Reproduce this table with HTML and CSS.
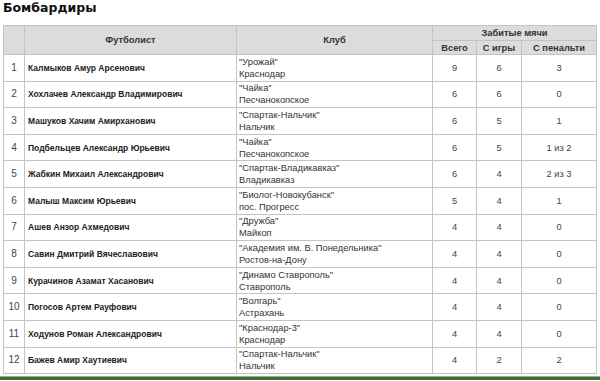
FILE: index.html
```html
<!DOCTYPE html>
<html lang="ru">
<head>
<meta charset="utf-8">
<link rel="stylesheet" href="styles.css">
</head>
<body>
<h2 class="title">Бомбардиры</h2>
<table class="scorers">
  <colgroup>
    <col class="c-num"><col class="c-name"><col class="c-club"><col class="c-all"><col class="c-play"><col class="c-pen">
  </colgroup>
  <thead>
    <tr class="h1">
      <th rowspan="2"></th>
      <th rowspan="2">Футболист</th>
      <th rowspan="2">Клуб</th>
      <th colspan="3">Забитые мячи</th>
    </tr>
    <tr class="h2">
      <th>Всего</th>
      <th>С игры</th>
      <th>С пенальти</th>
    </tr>
  </thead>
  <tbody>
    <tr><td class="n">1</td><td class="p">Калмыков Амур Арсенович</td><td class="club">"Урожай"<br>Краснодар</td><td class="v">9</td><td class="v">6</td><td class="v">3</td></tr>
    <tr><td class="n">2</td><td class="p">Хохлачев Александр Владимирович</td><td class="club">"Чайка"<br>Песчанокопское</td><td class="v">6</td><td class="v">6</td><td class="v">0</td></tr>
    <tr><td class="n">3</td><td class="p">Машуков Хачим Амирханович</td><td class="club">"Спартак-Нальчик"<br>Нальчик</td><td class="v">6</td><td class="v">5</td><td class="v">1</td></tr>
    <tr><td class="n">4</td><td class="p">Подбельцев Александр Юрьевич</td><td class="club">"Чайка"<br>Песчанокопское</td><td class="v">6</td><td class="v">5</td><td class="v">1 из 2</td></tr>
    <tr><td class="n">5</td><td class="p">Жабкин Михаил Александрович</td><td class="club">"Спартак-Владикавказ"<br>Владикавказ</td><td class="v">6</td><td class="v">4</td><td class="v">2 из 3</td></tr>
    <tr><td class="n">6</td><td class="p">Малыш Максим Юрьевич</td><td class="club">"Биолог-Новокубанск"<br>пос. Прогресс</td><td class="v">5</td><td class="v">4</td><td class="v">1</td></tr>
    <tr><td class="n">7</td><td class="p">Ашев Анзор Ахмедович</td><td class="club">"Дружба"<br>Майкоп</td><td class="v">4</td><td class="v">4</td><td class="v">0</td></tr>
    <tr><td class="n">8</td><td class="p">Савин Дмитрий Вячеславович</td><td class="club">"Академия им. В. Понедельника"<br>Ростов-на-Дону</td><td class="v">4</td><td class="v">4</td><td class="v">0</td></tr>
    <tr><td class="n">9</td><td class="p">Курачинов Азамат Хасанович</td><td class="club">"Динамо Ставрополь"<br>Ставрополь</td><td class="v">4</td><td class="v">4</td><td class="v">0</td></tr>
    <tr><td class="n">10</td><td class="p">Погосов Артем Рауфович</td><td class="club">"Волгарь"<br>Астрахань</td><td class="v">4</td><td class="v">4</td><td class="v">0</td></tr>
    <tr><td class="n">11</td><td class="p">Ходунов Роман Александрович</td><td class="club">"Краснодар-3"<br>Краснодар</td><td class="v">4</td><td class="v">4</td><td class="v">0</td></tr>
    <tr><td class="n">12</td><td class="p">Бажев Амир Хаутиевич</td><td class="club">"Спартак-Нальчик"<br>Нальчик</td><td class="v">4</td><td class="v">2</td><td class="v">2</td></tr>
  </tbody>
</table>
<div class="footer-bar"></div>
</body>
</html>
```
FILE: styles.css
```css
html, body {
  margin: 0;
  padding: 0;
  background: #ffffff;
  height: 381px;
  overflow: hidden;
}
body {
  font-family: "Liberation Sans", Arial, sans-serif;
  color: #222;
}
.title {
  margin: 0 0 0 3px;
  height: 25px;
  font-family: "DejaVu Sans", Verdana, sans-serif;
  font-size: 12.5px;
  font-weight: bold;
  line-height: 16px;
  color: #111;
}
.scorers {
  margin-left: 3px;
  width: 593px;
  border-collapse: collapse;
  table-layout: fixed;
  font-size: 9.3px;
  border: 1px solid #c4c4c4;
}
.c-num { width: 21px; }
.c-name { width: 212px; }
.c-club { width: 196px; }
.c-all { width: 44px; }
.c-play { width: 45px; }
.c-pen { width: 75px; }
.scorers th {
  background: #dcdcdc;
  border: 1px solid #c4c4c4;
  font-weight: bold;
  font-size: 9.3px;
  color: #333;
  padding: 0;
  text-align: center;
}
.h1 th { height: 14px; }
.h2 th { height: 13px; }
.scorers td {
  border: 1px solid #c4c4c4;
  padding: 0;
  line-height: 12px;
  height: 25.6px;
  vertical-align: middle;
}
.n {
  text-align: center;
  color: #444;
  font-size: 10px;
}
.p {
  font-weight: bold;
  font-size: 8.5px;
  padding-left: 3px !important;
  color: #222;
}
.club {
  padding-left: 2px !important;
  color: #333;
}
.v {
  text-align: center;
  color: #444;
}
.footer-bar {
  margin-top: 2px;
  height: 3px;
  background: #3f6b3a;
  border-top: 1px solid #8fb08a;
}
```
